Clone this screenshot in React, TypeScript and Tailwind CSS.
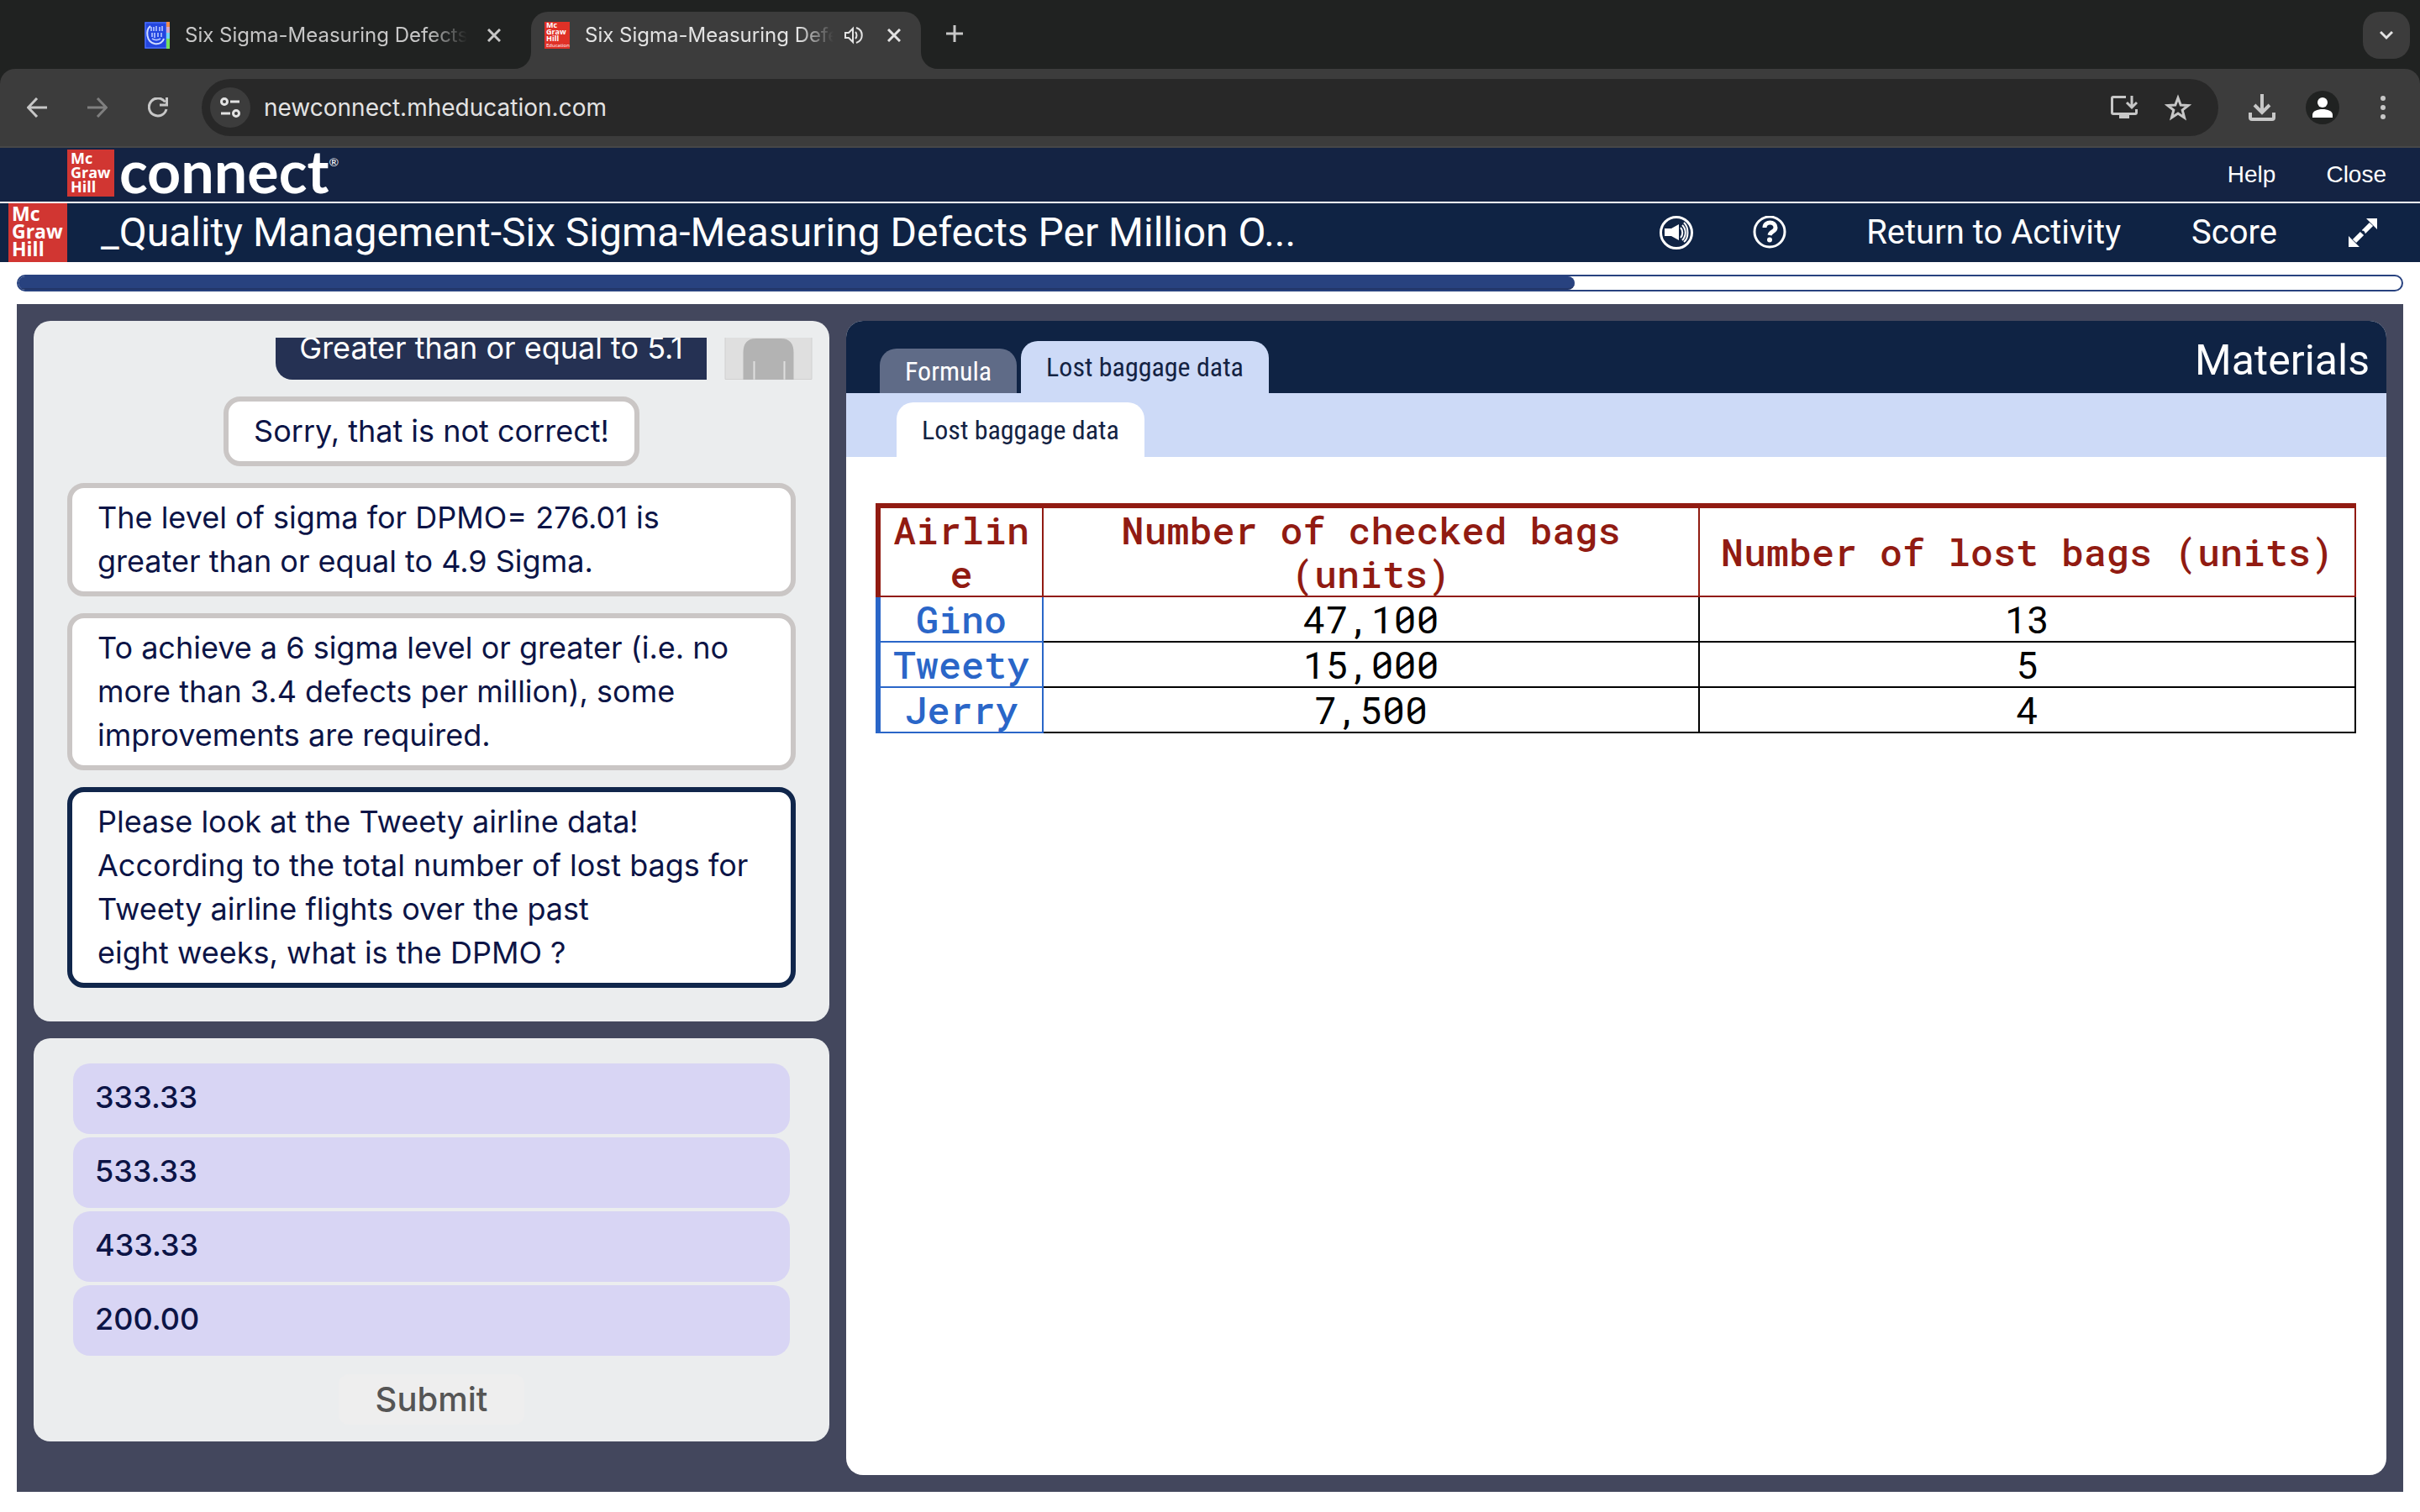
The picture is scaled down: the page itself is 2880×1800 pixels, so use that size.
import type { ReactNode } from 'react';

interface ChatMessage {
  lines: string[];
  current?: boolean;
  fit?: boolean;
}

const MESSAGES: ChatMessage[] = [
  { lines: ['Sorry, that is not correct!'], fit: true },
  { lines: ['The level of sigma for DPMO= 276.01 is', 'greater than or equal to 4.9 Sigma.'] },
  {
    lines: [
      'To achieve a 6 sigma level or greater (i.e. no',
      'more than 3.4 defects per million), some',
      'improvements are required.',
    ],
  },
  {
    lines: [
      'Please look at the Tweety airline data!',
      'According to the total number of lost bags for',
      'Tweety airline flights over the past',
      'eight weeks, what is the DPMO ?',
    ],
    current: true,
  },
];

const ANSWERS = ['333.33', '533.33', '433.33', '200.00'];

const BAGGAGE = [
  { airline: 'Gino', checked: '47,100', lost: '13' },
  { airline: 'Tweety', checked: '15,000', lost: '5' },
  { airline: 'Jerry', checked: '7,500', lost: '4' },
];

function Icon({ className, viewBox = '0 0 24 24', children }: { className: string; viewBox?: string; children: ReactNode }) {
  return (
    <svg className={className} viewBox={viewBox} fill="none" stroke="currentColor" aria-hidden="true">
      {children}
    </svg>
  );
}

function CloseIcon() {
  return (
    <Icon className="h-4 w-4" viewBox="0 0 16 16">
      <path d="M1 1l14 14M15 1L1 15" strokeWidth="3" />
    </Icon>
  );
}

function McGrawLogo({ className }: { className: string }) {
  return (
    <span className={`block shrink-0 bg-[#d13632] font-['Open_Sans',sans-serif] font-bold text-white ${className}`}>
      <span className="block">Mc</span>
      <span className="block">Graw</span>
      <span className="block">Hill</span>
    </span>
  );
}

function TabStrip() {
  return (
    <div className="flex h-[82px] items-end bg-[#202221] pr-3 pl-[172px] font-[Inter,sans-serif] text-[24px] text-[#c7c7c7]">
      <div className="flex h-[68px] w-[460px] items-center pb-3">
        <svg className="h-8 w-[30px] shrink-0" viewBox="0 0 30 32" aria-hidden="true">
          <rect width="30" height="32" fill="#2346e0" />
          <path d="M1 1h25v30H1z" fill="none" stroke="#5b7cf5" />
          <path d="M26 0h4v6h-4z" fill="#f08a4b" />
          <path d="M26 6h4v7h-4z" fill="#d5a8c8" />
          <path d="M26 13h4v7h-4z" fill="#6fd3f5" />
          <path d="M26 20h4v12h-4z" fill="#74e05a" />
          <path d="M7 5C1 10 2 24 12 26c6 1 10-2 11-6" fill="none" stroke="#cfdcff" strokeWidth="2" />
          <path d="M8 6v5M11 6v5M14 5v6M18 6v5M21 5v6M9 13v5M12 13v6M16 13v5M20 13v5M9 20c3 2 7 2 10 0" fill="none" stroke="#b9c9ff" strokeWidth="1.6" />
        </svg>
        <span className="ml-[18px] w-[336px] overflow-hidden [mask-image:linear-gradient(to_right,black_86%,transparent)] whitespace-nowrap">
          Six Sigma-Measuring Defects
        </span>
        <button type="button" aria-label="Close tab" className="ml-6">
          <CloseIcon />
        </button>
      </div>
      <div className="relative flex h-[68px] w-[464px] items-center rounded-t-[20px] bg-[#3c3c3c] pb-3 pl-4 text-[#e3e3e3]">
        <svg className="absolute bottom-0 -left-5 h-5 w-5" viewBox="0 0 20 20" aria-hidden="true">
          <path d="M20 0v20H0A20 20 0 0 0 20 0z" fill="#3c3c3c" />
        </svg>
        <svg className="absolute -right-5 bottom-0 h-5 w-5" viewBox="0 0 20 20" aria-hidden="true">
          <path d="M0 0v20h20A20 20 0 0 1 0 0z" fill="#3c3c3c" />
        </svg>
        <span className="block h-8 w-[30px] shrink-0 bg-[#e03127] pl-[2px] font-['Open_Sans',sans-serif] text-[9px] leading-[8px] font-bold text-white">
          <span className="block">Mc</span>
          <span className="block">Graw</span>
          <span className="block">Hill</span>
          <span className="block text-[6px] font-normal">Education</span>
        </span>
        <span className="ml-[18px] w-[296px] overflow-hidden [mask-image:linear-gradient(to_right,black_86%,transparent)] whitespace-nowrap">
          Six Sigma-Measuring Defects
        </span>
        <button type="button" aria-label="Mute tab" className="ml-3">
          <Icon className="h-6 w-6">
            <path d="M2 9v6h4l5 5V4L6 9z" strokeWidth="2" />
            <path d="M14 8c2 2 2 6 0 8M15 3c9 3 9 15 0 18" strokeWidth="2" />
          </Icon>
        </button>
        <button type="button" aria-label="Close tab" className="ml-7">
          <CloseIcon />
        </button>
      </div>
      <button type="button" aria-label="New tab" className="mb-8 ml-[30px]">
        <Icon className="h-5 w-5" viewBox="0 0 20 20">
          <path d="M10 0v20M0 10h20" strokeWidth="3" />
        </Icon>
      </button>
      <button
        type="button"
        aria-label="Search tabs"
        className="mb-3 ml-auto flex h-14 w-14 items-center justify-center rounded-[20px] bg-[#3c3c3c] text-[#e3e3e3]"
      >
        <Icon className="h-4 w-4" viewBox="0 0 16 16">
          <path d="M1 4l7 7 7-7" strokeWidth="3" />
        </Icon>
      </button>
    </div>
  );
}

function Toolbar() {
  return (
    <div className="bg-[#202221]">
      <div className="flex h-[94px] items-center rounded-t-[18px] border-b-2 border-[#474747] bg-[#3c3c3c] pr-8 pl-8 text-[#c7c7c7]">
        <button type="button" aria-label="Back">
          <Icon className="h-6 w-6">
            <path d="M24 12H2M12 1L1.500 12 12 23" strokeWidth="3" />
          </Icon>
        </button>
        <button type="button" aria-label="Forward" className="ml-12 text-[#7f7f7f]">
          <Icon className="h-6 w-6">
            <path d="M0 12h22M12 1l10.500 11L12 23" strokeWidth="3" />
          </Icon>
        </button>
        <button type="button" aria-label="Reload" className="ml-12">
          <Icon className="h-6 w-6">
            <path d="M20.500 5.500A10.500 10.500 0 1 0 22 14" strokeWidth="3" />
            <path d="M22.500 0v9H14" strokeWidth="3" />
          </Icon>
        </button>
        <div className="ml-10 flex h-[68px] flex-1 items-center rounded-full bg-[#282828] pr-8 pl-[10px]">
          <button
            type="button"
            aria-label="View site information"
            className="flex h-12 w-12 shrink-0 items-center justify-center rounded-full bg-[#3c3c3c] text-[#e3e3e3]"
          >
            <Icon className="h-6 w-6">
              <circle cx="5" cy="5" r="3.500" strokeWidth="3" />
              <circle cx="19" cy="19" r="3.500" strokeWidth="3" />
              <path d="M12 5h11M1 19h11" strokeWidth="3" />
            </Icon>
          </button>
          <input
            type="text"
            aria-label="Address"
            defaultValue="newconnect.mheducation.com"
            className="ml-4 min-w-0 flex-1 bg-transparent font-[Inter,sans-serif] text-[28px] text-[#e3e3e3] outline-none"
          />
          <button type="button" aria-label="Install app">
            <Icon className="h-8 w-8" viewBox="0 0 32 32">
              <path d="M18 3.500H3Q1.500 3.500 1.500 5V22Q1.500 23.500 3 23.500H29Q30.500 23.500 30.500 22V18" strokeWidth="3" />
              <path d="M10 24h12v5H10z" fill="currentColor" stroke="none" />
              <path d="M25 2v14M19 10l6 6 6-6" strokeWidth="3" />
            </Icon>
          </button>
          <button type="button" aria-label="Bookmark" className="ml-8">
            <Icon className="h-8 w-8" viewBox="0 0 32 32">
              <path d="M16 4.500l3.200 8.500 9 .5-7 5.600 2.400 8.900-7.600-5-7.600 5 2.400-8.900-7-5.600 9-.5z" strokeWidth="3" />
            </Icon>
          </button>
        </div>
        <button type="button" aria-label="Downloads" className="ml-9">
          <Icon className="h-8 w-8" viewBox="0 0 32 32">
            <path d="M16 0v21M7 13l9 9 9-9" strokeWidth="4" />
            <path d="M2 22v6Q2 30 4 30H28Q30 30 30 28V22" strokeWidth="4" />
          </Icon>
        </button>
        <button type="button" aria-label="Profile" className="ml-9">
          <svg className="h-10 w-10" viewBox="0 0 40 40" aria-hidden="true">
            <circle cx="20" cy="20" r="20" fill="#202221" />
            <circle cx="20" cy="14" r="6" fill="#fff" />
            <path d="M8 32v-3c0-5 6-7 12-7s12 2 12 7v3z" fill="#fff" />
          </svg>
        </button>
        <button type="button" aria-label="Menu" className="ml-[40px]">
          <svg className="h-8 w-6" viewBox="0 0 24 32" fill="currentColor" aria-hidden="true">
            <circle cx="12" cy="5" r="3" />
            <circle cx="12" cy="16" r="3" />
            <circle cx="12" cy="27" r="3" />
          </svg>
        </button>
      </div>
    </div>
  );
}

function ConnectBar() {
  return (
    <header className="flex h-[66px] items-start justify-between border-b-2 border-white bg-[#142343] pr-10 pl-20 text-white">
      <div className="flex h-16 items-start pt-[2px]">
        <McGrawLogo className="h-14 w-14 pt-[2px] pl-1 text-[18px] leading-[17px]" />
        <span className="ml-[6px] font-[Lato,sans-serif] text-[70px] leading-[50px] font-bold">connect</span>
        <span className="mt-1 font-[Lato,sans-serif] text-[14px]">®</span>
      </div>
      <nav className="flex h-16 items-center gap-[60px] font-['Liberation_Sans',sans-serif] text-[28px]">
        <a href="#help">Help</a>
        <a href="#close">Close</a>
      </nav>
    </header>
  );
}

function ActivityBar() {
  return (
    <div className="flex h-[70px] items-center bg-[#0f2344] pr-[50px] pl-[10px] font-[Roboto,sans-serif] text-white">
      <McGrawLogo className="h-[70px] w-[70px] pt-[2px] pl-1 text-[23px] leading-[21px]" />
      <h1 className="ml-10 text-[48px]">_Quality Management-Six Sigma-Measuring Defects Per Million O...</h1>
      <button type="button" aria-label="Read aloud" className="ml-auto">
        <Icon className="h-10 w-10" viewBox="0 0 40 40">
          <circle cx="20" cy="20" r="18.500" strokeWidth="3" />
          <path d="M6 15h8l9-5v19l-9-5H6z" fill="currentColor" stroke="none" />
          <path d="M25 14c3 3 3 9 0 12M27 11c5 5 5 13 0 18M29 8c6 6 6 18 0 23" strokeWidth="2" />
        </Icon>
      </button>
      <button type="button" aria-label="Help" className="ml-[71px]">
        <Icon className="h-10 w-10" viewBox="0 0 40 40">
          <circle cx="20" cy="19" r="18" strokeWidth="3" />
          <path d="M14 14c0-8 13-8 13 0 0 5-6 4-7 9" strokeWidth="5" />
          <circle cx="20" cy="28.500" r="3" fill="currentColor" stroke="none" />
        </Icon>
      </button>
      <button type="button" className="ml-[95px] text-[40px]">
        Return to Activity
      </button>
      <button type="button" className="ml-[84px] text-[40px]">
        Score
      </button>
      <button type="button" aria-label="Full screen" className="ml-[84px]">
        <Icon className="h-9 w-9" viewBox="0 0 36 36">
          <path d="M19 17l9-9M17 19l-9 9" strokeWidth="6" />
          <path d="M19.500 18.500l-2-2" stroke="#0f2344" strokeWidth="3" />
          <path d="M22 1h13v13zM1 22v13h13z" fill="currentColor" stroke="none" />
        </Icon>
      </button>
    </div>
  );
}

function MessageBubble({ message }: { message: ChatMessage }) {
  const border = message.current ? 'border-[#10264b]' : 'border-[#cac6c5]';
  const width = message.fit ? 'self-center' : 'w-full';
  return (
    <div className={`shrink-0 rounded-[20px] border-[6px] bg-white px-[30px] pt-[9px] pb-[10px] leading-[52px] ${border} ${width}`}>
      {message.lines.map((line) => (
        <p key={line} className="whitespace-nowrap">
          {line}
        </p>
      ))}
    </div>
  );
}

function ChatPanel() {
  return (
    <section className="min-h-0 flex-1 rounded-[20px] bg-[#ebedee] p-5 font-[Inter,sans-serif] text-[36px] text-[#0c1446]">
      <div className="flex h-full flex-col justify-end gap-5 overflow-hidden px-5 pb-5">
        <div className="-mr-5 flex shrink-0 items-end justify-end gap-[21px]">
          <p className="rounded-l-[20px] rounded-tr-[20px] bg-[#253153] px-7 py-3 leading-[52px] text-white">
            Greater than or equal to 5.1
          </p>
          <svg className="h-[104px] w-[105px]" viewBox="0 0 104 104" aria-hidden="true">
            <path d="M.5.5h103v103H.5z" fill="#dfdfdf" stroke="#d0d0d0" />
            <circle cx="52" cy="28" r="19" fill="#b3b3b3" />
            <path d="M22 104V72q0-17 15-17h30q15 0 15 17v32H72V82h-2v22H36V82h-2v22z" fill="#b3b3b3" />
          </svg>
        </div>
        {MESSAGES.map((message) => (
          <MessageBubble key={message.lines[0]} message={message} />
        ))}
      </div>
    </section>
  );
}

function AnswerPanel() {
  return (
    <section className="flex flex-col rounded-[20px] bg-[#ebedee] px-[47px] pt-[30px] pb-5 font-[Inter,sans-serif] font-medium">
      <div className="flex flex-col gap-1">
        {ANSWERS.map((answer) => (
          <button
            key={answer}
            type="button"
            className="h-[84px] rounded-[20px] bg-[#d8d5f4] px-[26px] pb-1 text-left text-[36px] text-[#0c1446]"
          >
            {answer}
          </button>
        ))}
      </div>
      <button
        type="button"
        disabled
        className="mt-[22px] h-[60px] self-center rounded-[12px] bg-[#eeeeee] px-11 text-[40px] leading-[60px] text-[#555555]"
      >
        Submit
      </button>
    </section>
  );
}

function BaggageTable() {
  return (
    <table className="w-full table-fixed border-separate border-spacing-0 text-center font-['Roboto_Mono','DejaVu_Sans_Mono',monospace] text-[45px] leading-[52px] text-black">
      <colgroup>
        <col className="w-[200px]" />
        <col />
        <col />
      </colgroup>
      <thead>
        <tr className="text-[#911b12]">
          <th className="border-t-[6px] border-r-2 border-b-2 border-l-[6px] border-[#911b12] px-[6px] font-medium break-words">
            Airline
          </th>
          <th className="border-t-[6px] border-r-2 border-b-2 border-[#911b12] font-medium">Number of checked bags (units)</th>
          <th className="border-t-[6px] border-r-2 border-b-2 border-[#911b12] font-medium">Number of lost bags (units)</th>
        </tr>
      </thead>
      <tbody>
        {BAGGAGE.map((row) => (
          <tr key={row.airline}>
            <th className="border-r-2 border-b-2 border-l-[6px] border-[#2a66c8] font-medium text-[#2a66c8]">{row.airline}</th>
            <td className="border-r-2 border-b-2 border-black">{row.checked}</td>
            <td className="border-r-2 border-b-2 border-black">{row.lost}</td>
          </tr>
        ))}
      </tbody>
    </table>
  );
}

function MaterialsPanel() {
  return (
    <section className="overflow-hidden rounded-[20px] bg-white font-[Roboto,sans-serif]">
      <div className="flex h-[86px] items-end bg-[#0f2344] pr-5 pl-10 font-['Roboto_Condensed',Roboto,sans-serif] text-[32px]">
        <button type="button" className="h-[53px] rounded-t-[20px] bg-[#5f6b87] px-[30px] text-white">
          Formula
        </button>
        <button type="button" className="ml-[5px] h-[62px] rounded-t-[20px] bg-[#cddaf7] px-[30px] text-[#142343]">
          Lost baggage data
        </button>
        <h2 className="ml-auto self-center pt-2 font-[Roboto,sans-serif] text-[50px] leading-[52px] text-white">Materials</h2>
      </div>
      <div className="flex h-[76px] items-end bg-[#cddaf7] pl-[60px] font-['Roboto_Condensed',Roboto,sans-serif] text-[32px]">
        <button type="button" className="h-[65px] rounded-t-[20px] bg-white px-[30px] text-[#142343]">
          Lost baggage data
        </button>
      </div>
      <div className="pt-[55px] pr-9 pl-[35px]">
        <BaggageTable />
      </div>
    </section>
  );
}

export default function App() {
  return (
    <div className="flex h-screen flex-col bg-white">
      <TabStrip />
      <Toolbar />
      <ConnectBar />
      <ActivityBar />
      <div className="px-5 py-[15px]">
        <div className="h-5 overflow-hidden rounded-[10px] border-2 border-[#28427f] bg-white">
          <div className="h-full w-[65.3%] rounded-r-[8px] border-b-2 border-[#223668] bg-[#28427f]" />
        </div>
      </div>
      <main className="mx-5 mb-6 grid min-h-0 flex-1 grid-cols-[947fr_1833fr] gap-5 bg-[#43475d] p-5">
        <div className="flex min-h-0 flex-col gap-5 pb-10">
          <ChatPanel />
          <AnswerPanel />
        </div>
        <MaterialsPanel />
      </main>
    </div>
  );
}
